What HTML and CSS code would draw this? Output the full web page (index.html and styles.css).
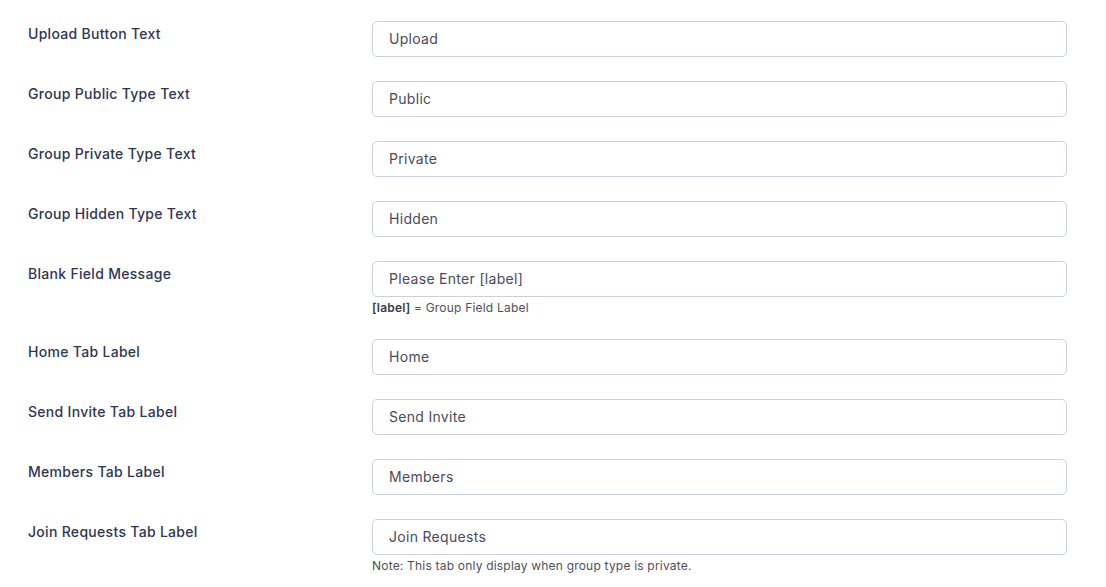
FILE: index.html
```html
<html>
<head>
  <meta charset="utf-8">
  <meta name="viewport" content="width=device-width, initial-scale=1.0">
  <title>Group settings</title>
  <link rel="stylesheet" href="styles.css">
</head>
<body>
  <div class="settings">
    <div class="row">
      <label class="label">Upload Button Text</label>
      <div class="field"><input class="text-input" type="text" value="Upload"></div>
    </div>
    <div class="row">
      <label class="label">Group Public Type Text</label>
      <div class="field"><input class="text-input" type="text" value="Public"></div>
    </div>
    <div class="row">
      <label class="label">Group Private Type Text</label>
      <div class="field"><input class="text-input" type="text" value="Private"></div>
    </div>
    <div class="row">
      <label class="label">Group Hidden Type Text</label>
      <div class="field"><input class="text-input" type="text" value="Hidden"></div>
    </div>
    <div class="row">
      <label class="label">Blank Field Message</label>
      <div class="field">
        <input class="text-input" type="text" value="Please Enter [label]">
        <p class="hint"><b>[label]</b> = Group Field Label</p>
      </div>
    </div>
    <div class="row">
      <label class="label">Home Tab Label</label>
      <div class="field"><input class="text-input" type="text" value="Home"></div>
    </div>
    <div class="row">
      <label class="label">Send Invite Tab Label</label>
      <div class="field"><input class="text-input" type="text" value="Send Invite"></div>
    </div>
    <div class="row">
      <label class="label">Members Tab Label</label>
      <div class="field"><input class="text-input" type="text" value="Members"></div>
    </div>
    <div class="row">
      <label class="label">Join Requests Tab Label</label>
      <div class="field">
        <input class="text-input" type="text" value="Join Requests">
        <p class="hint">Note: This tab only display when group type is private.</p>
      </div>
    </div>
  </div>
</body>
</html>
```

FILE: styles.css
```css
body {
  margin: 0;
  background: #fff;
  font-family: Inter, "Open Sans", sans-serif;
}

.settings {
  display: flex;
  flex-direction: column;
  padding: 9px 39px 0 28px;
}

.row {
  display: flex;
  padding: 12px 0;
}

.label {
  width: 344px;
  flex-shrink: 0;
  padding-top: 3px;
  font-size: 14px;
  line-height: 20px;
  font-weight: 500;
  letter-spacing: 0.3px;
  color: #2f3652;
}

.field {
  flex: 1;
}

.text-input {
  display: block;
  box-sizing: border-box;
  width: 100%;
  height: 36px;
  padding: 0 16px 2px;
  border: 1px solid #ccd0da;
  border-radius: 5px;
  background: #fff;
  font-family: Inter, "Open Sans", sans-serif;
  font-size: 14px;
  letter-spacing: 0.3px;
  color: #4b4a5c;
  outline: none;
}

.hint {
  margin: 2px 0 -2px;
  font-size: 12px;
  line-height: 18px;
  letter-spacing: 0.2px;
  color: #50505a;
}

.hint b {
  color: #3a3a48;
  font-weight: 600;
}
```
